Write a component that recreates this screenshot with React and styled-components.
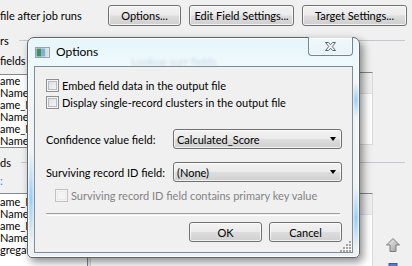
import React from 'react';
import styled, { createGlobalStyle } from 'styled-components';

const GlobalStyle = createGlobalStyle`
  html, body {
    margin: 0;
    padding: 0;
    background: #f0f0f0;
  }
  body {
    font-family: Lato, "Noto Sans", sans-serif;
    font-size: 11px;
    color: #000;
  }
`;

const Screen = styled.div`
  position: relative;
  width: 412px;
  height: 266px;
  overflow: hidden;
  background: #f0f0f0;
`;

/* ---------- host window behind the dialog ---------- */

const HostWindow = styled.div`
  display: flex;
  flex-direction: column;
`;

const TopBar = styled.div`
  display: flex;
  align-items: flex-start;
  height: 33px;
  padding: 5px 5px 0 0;
  box-sizing: border-box;
`;

const RunLabel = styled.span`
  flex: 1;
  line-height: 21px;
  white-space: nowrap;
`;

const ButtonGroup = styled.div`
  display: flex;
  gap: 8px;
`;

const WinButton = styled.button`
  box-sizing: border-box;
  width: ${p => p.$w}px;
  height: ${p => p.$h || 21}px;
  padding: 0;
  border: 1px solid #707070;
  border-radius: 3px;
  background: linear-gradient(#f2f2f2 0%, #ebebeb 48%, #dddddd 52%, #cfcfcf 100%);
  box-shadow: inset 0 0 0 1px rgba(255, 255, 255, 0.75);
  font: inherit;
  color: #000;
`;

const Group = styled.section`
  display: flex;
  flex-direction: column;
  height: ${p => p.$h}px;
`;

const GroupCaption = styled.div`
  display: flex;
  align-items: center;
  gap: 10px;
  height: 14px;
  padding-right: 7px;
  white-space: nowrap;

  &::after {
    content: '';
    flex: 1;
    height: 1px;
    background: #c4c8cc;
  }
`;

const GroupBody = styled.div`
  flex: 1;
  display: grid;
  grid-template-columns: 88px 283px 1fr;
  column-gap: 2px;
  min-height: 0;
`;

const LeftColumn = styled.div`
  display: flex;
  flex-direction: column;
  min-height: 0;
`;

const FieldLabel = styled.div`
  margin-top: ${p => p.$top}px;
  height: 12px;
  line-height: 12px;
  color: ${p => (p.$link ? '#2a8ae0' : '#000')};
`;

const FieldList = styled.div`
  margin-top: ${p => p.$top}px;
  height: ${p => p.$h}px;
  box-sizing: border-box;
  padding-top: ${p => p.$pad}px;
  background: #fff;
  border: 1px solid #828790;
  border-left: none;
  overflow: hidden;
`;

const FieldItem = styled.div`
  height: 12px;
  line-height: 12px;
  white-space: nowrap;
`;

const GridPanel = styled.div`
  margin-top: ${p => p.$top}px;
  height: ${p => (p.$h ? `${p.$h}px` : 'auto')};
  flex: ${p => (p.$h ? 'none' : '1')};
  display: flex;
  flex-direction: column;
  border: 1px solid #dadada;
  border-top: 1px solid #828790;
  background: #fff;
  overflow: hidden;
`;

const PanelHeader = styled.div`
  height: 20px;
  flex: none;
  background: #f0f0f0;
  border-bottom: 1px solid #e2e2e2;
`;

const PanelBody = styled.div`
  flex: 1;
  display: flex;
  flex-direction: column;
  justify-content: flex-end;
`;

const PanelRow = styled.div`
  display: grid;
  grid-template-columns: 36px 110px 1fr;
  height: 15px;
  flex: none;
  border-top: 1px solid #c8c8c8;
  margin-bottom: -9px;
`;

const PanelCell = styled.div`
  padding-left: 5px;
  border-left: 1px solid #c8c8c8;
  color: #1a2c5a;
  line-height: 14px;
  white-space: nowrap;
`;

const ToolColumn = styled.div`
  display: flex;
  flex-direction: column;
  align-items: flex-start;
  gap: 10px;
  padding: ${p => p.$top}px 0 0 10px;
`;

const ToolIcon = styled.svg`
  display: block;
  flex: none;
`;

/* ---------- Options dialog ---------- */

const Dialog = styled.div`
  position: absolute;
  left: 27px;
  top: 37px;
  width: 333px;
  height: 221px;
  box-sizing: border-box;
  display: flex;
  flex-direction: column;
  padding: 0 6px 4px 6px;
  border: 1px solid #5c6670;
  border-radius: 7px 7px 5px 5px;
  background: linear-gradient(180deg, #e6f6fb 0%, #eef9fc 12%, #f2f5f7 30%, #eef1f3 100%);
  box-shadow: 3px 4px 9px rgba(0, 0, 0, 0.45), inset 0 0 0 1px rgba(255, 255, 255, 0.85);
`;

const Glow = styled.span`
  position: absolute;
  ${p => (p.$side === 'left' ? 'left: 1px;' : 'right: 1px;')}
  top: ${p => p.$top}px;
  width: 4px;
  height: ${p => p.$h}px;
  border-radius: 2px;
  background: linear-gradient(180deg, rgba(110, 190, 255, 0) 0%, rgba(110, 190, 255, 0.75) 50%, rgba(110, 190, 255, 0) 100%);
  filter: blur(1px);
`;

const GlassBlur = styled.span`
  position: absolute;
  left: 103px;
  top: 17px;
  color: #9fb4c8;
  opacity: 0.45;
  filter: blur(1.4px);
  white-space: nowrap;
`;

const TitleBar = styled.div`
  display: flex;
  align-items: center;
  gap: 6px;
  height: 28px;
  flex: none;
  padding-left: 1px;
`;

const TitleText = styled.span`
  font-size: 12px;
  color: #000;
  line-height: 14px;
`;

const CloseButton = styled.div`
  position: absolute;
  top: -1px;
  right: 6px;
  width: 45px;
  height: 19px;
  box-sizing: border-box;
  display: flex;
  align-items: center;
  justify-content: center;
  border: 1px solid #78838e;
  border-top: none;
  border-radius: 0 0 4px 4px;
  background: linear-gradient(180deg, rgba(255, 255, 255, 0.4), rgba(230, 240, 245, 0.6));
  box-shadow: inset 0 0 0 1px rgba(255, 255, 255, 0.6);
`;

const Client = styled.div`
  position: relative;
  flex: 1;
  display: flex;
  flex-direction: column;
  padding: 12px 10px 0 11px;
  border: 1px solid #828c96;
  background: #f0f0f0;
`;

const CheckRow = styled.label`
  display: flex;
  align-items: center;
  gap: 3px;
  height: 13px;
  margin-top: ${p => p.$top || 0}px;
  padding-left: ${p => p.$indent || 0}px;
  color: ${p => (p.$disabled ? '#838383' : '#000')};
  white-space: nowrap;
`;

const CheckBox = styled.span`
  box-sizing: border-box;
  width: 13px;
  height: 13px;
  flex: none;
  border: 1px solid ${p => (p.$disabled ? '#c2c2c2' : '#8e8f8f')};
  background: ${p =>
    p.$disabled
      ? '#f4f4f4'
      : 'linear-gradient(135deg, #d6d8dc 0%, #e9eaec 50%, #f8f8f8 100%)'};
  box-shadow: inset 0 0 0 1px #f4f4f4,
    inset 0 0 0 2px ${p => (p.$disabled ? '#ebebeb' : '#b9bcc1')};
`;

const FieldGrid = styled.div`
  display: grid;
  grid-template-columns: 127px 1fr;
  row-gap: 13px;
  align-items: center;
  margin-top: 20px;
  white-space: nowrap;
`;

const Combo = styled.div`
  box-sizing: border-box;
  height: 20px;
  display: flex;
  align-items: center;
  justify-content: space-between;
  padding: 0 5px 0 3px;
  border: 1px solid #707070;
  border-radius: 3px;
  background: linear-gradient(#f2f2f2 0%, #ebebeb 48%, #dddddd 52%, #cfcfcf 100%);
  box-shadow: inset 0 0 0 1px rgba(255, 255, 255, 0.7);
  white-space: nowrap;

  &::after {
    content: '';
    width: 0;
    height: 0;
    border-left: 3.5px solid transparent;
    border-right: 3.5px solid transparent;
    border-top: 4px solid #000;
  }
`;

const Separator = styled.div`
  margin: 11px 2px 0 0;
  height: 1px;
  border-top: 1px solid #a0a0a0;
  border-bottom: 1px solid #fff;
`;

const ButtonRow = styled.div`
  display: flex;
  justify-content: flex-end;
  gap: 7px;
  margin-top: 6px;
`;

const Grip = styled.svg`
  position: absolute;
  right: 0;
  bottom: 0;
`;

const listOne = ['ame', 'Name', 'ame_M', 'Name_', 'ame_M', 'Name_'];
const listTwo = ['ame_M', 'Name_', 'ame_M', 'Name_', 'gregat'];

function UpArrow() {
  return (
    <ToolIcon width="16" height="16" viewBox="0 0 16 16">
      <defs>
        <linearGradient id="upg" x1="0" y1="0" x2="1" y2="1">
          <stop offset="0" stopColor="#f4f4f4" />
          <stop offset="1" stopColor="#9a9a9a" />
        </linearGradient>
      </defs>
      <path d="M8 1.5 L14.5 8 H11 V14.5 H5 V8 H1.5 Z" fill="url(#upg)" stroke="#7d7d7d" strokeLinejoin="round" />
    </ToolIcon>
  );
}

function DownIcon() {
  return (
    <ToolIcon width="16" height="16" viewBox="0 0 16 16">
      <rect x="4" y="0.5" width="8" height="6" fill="#4a7fd0" stroke="#2f5ea8" />
    </ToolIcon>
  );
}

function WindowIcon() {
  return (
    <svg width="15" height="11" viewBox="0 0 15 11" style={{ display: 'block' }}>
      <rect x="0.5" y="0.5" width="14" height="10" fill="#e8ecef" stroke="#9aa3ab" />
      <rect x="1.5" y="1.5" width="5" height="8" fill="#3f8f6a" />
      <rect x="6.5" y="1.5" width="4" height="8" fill="#7fb0d8" />
      <rect x="10.5" y="1.5" width="3" height="8" fill="#d9dee2" />
    </svg>
  );
}

function CloseGlyph() {
  return (
    <svg width="13" height="11" viewBox="0 0 13 11">
      <path
        d="M1.5 1.5 H4.5 L6.5 3.8 L8.5 1.5 H11.5 L8.2 5.5 L11.5 9.5 H8.5 L6.5 7.2 L4.5 9.5 H1.5 L4.8 5.5 Z"
        fill="#fff"
        stroke="#5a646e"
        strokeLinejoin="round"
      />
    </svg>
  );
}

function ResizeGrip() {
  const dots = [
    [9, 1], [9, 4], [6, 4], [9, 7], [6, 7], [3, 7], [9, 10], [6, 10], [3, 10], [0, 10],
  ];
  return (
    <Grip width="12" height="12" viewBox="0 0 12 12">
      {dots.map(([x, y]) => (
        <g key={`${x}-${y}`}>
          <rect x={x + 1} y={y + 1} width="2" height="2" fill="#fff" />
          <rect x={x} y={y} width="2" height="2" fill="#a3a3a3" />
        </g>
      ))}
    </Grip>
  );
}

export default function App() {
  return (
    <>
      <GlobalStyle />
      <Screen>
        <HostWindow>
          <TopBar>
            <RunLabel>file after job runs</RunLabel>
            <ButtonGroup>
              <WinButton $w={73}>Options...</WinButton>
              <WinButton $w={105}>Edit Field Settings...</WinButton>
              <WinButton $w={105}>Target Settings...</WinButton>
            </ButtonGroup>
          </TopBar>

          <Group $h={122}>
            <GroupCaption>rs</GroupCaption>
            <GroupBody>
              <LeftColumn>
                <FieldLabel $top={8}>fields</FieldLabel>
                <FieldList $top={7} $h={74} $pad={0}>
                  {listOne.map((t, i) => (
                    <FieldItem key={i}>{t}</FieldItem>
                  ))}
                </FieldList>
              </LeftColumn>
              <LeftColumn>
                <GridPanel $top={25} $h={71}>
                  <PanelHeader />
                  <PanelBody />
                </GridPanel>
              </LeftColumn>
              <ToolColumn $top={0} />
            </GroupBody>
          </Group>

          <Group $h={111}>
            <GroupCaption>ds</GroupCaption>
            <GroupBody>
              <LeftColumn>
                <FieldLabel $top={6} $link>:</FieldLabel>
                <FieldList $top={6} $h={80} $pad={2}>
                  {listTwo.map((t, i) => (
                    <FieldItem key={i}>{t}</FieldItem>
                  ))}
                </FieldList>
              </LeftColumn>
              <LeftColumn>
                <GridPanel $top={24}>
                  <PanelHeader />
                  <PanelBody>
                    <PanelRow>
                      <PanelCell />
                      <PanelCell>Parent_Name</PanelCell>
                      <PanelCell>Parent_Name</PanelCell>
                    </PanelRow>
                  </PanelBody>
                </GridPanel>
              </LeftColumn>
              <ToolColumn $top={68}>
                <UpArrow />
                <DownIcon />
              </ToolColumn>
            </GroupBody>
          </Group>
        </HostWindow>

        <Dialog>
          <Glow $side="left" $top={115} $h={90} />
          <Glow $side="right" $top={45} $h={34} />
          <Glow $side="right" $top={150} $h={60} />
          <GlassBlur>Lookup surr fields</GlassBlur>
          <TitleBar>
            <WindowIcon />
            <TitleText>Options</TitleText>
          </TitleBar>
          <CloseButton>
            <CloseGlyph />
          </CloseButton>
          <Client>
            <CheckRow>
              <CheckBox />
              Embed field data in the output file
            </CheckRow>
            <CheckRow $top={4}>
              <CheckBox />
              Display single-record clusters in the output file
            </CheckRow>
            <FieldGrid>
              <span>Confidence value field:</span>
              <Combo>Calculated_Score</Combo>
              <span>Surviving record ID field:</span>
              <Combo>(None)</Combo>
            </FieldGrid>
            <CheckRow $top={7} $indent={9} $disabled>
              <CheckBox $disabled />
              Surviving record ID field contains primary key value
            </CheckRow>
            <Separator />
            <ButtonRow>
              <WinButton $w={73} $h={20}>OK</WinButton>
              <WinButton $w={73} $h={20}>Cancel</WinButton>
            </ButtonRow>
            <ResizeGrip />
          </Client>
        </Dialog>
      </Screen>
    </>
  );
}
